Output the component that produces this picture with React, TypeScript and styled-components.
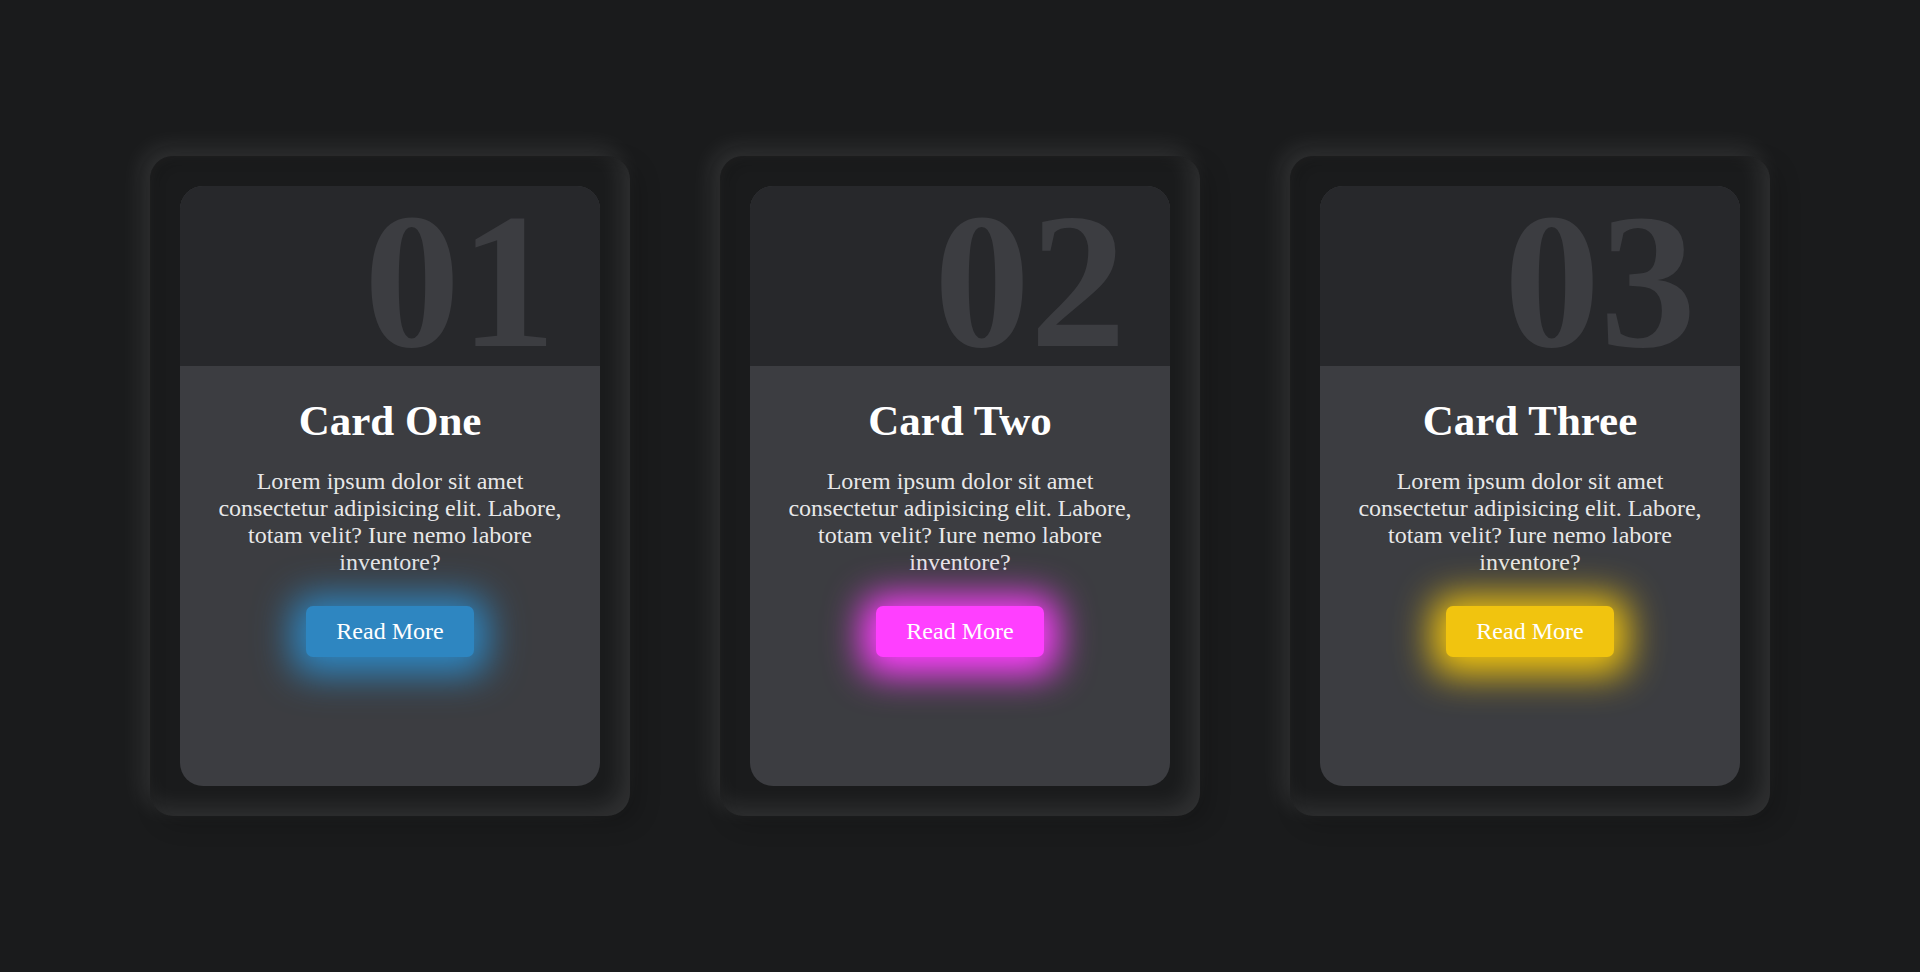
import React from 'react';
import styled, { createGlobalStyle } from 'styled-components';

const GlobalStyle = createGlobalStyle`
  * {
    margin: 0;
    padding: 0;
    box-sizing: border-box;
  }

  body {
    background: #1a1b1c;
    font-family: 'Liberation Serif', 'Times New Roman', serif;
  }
`;

const Page = styled.main`
  display: flex;
  flex-wrap: wrap;
  justify-content: center;
  align-items: center;
  align-content: center;
  gap: 90px;
  min-height: 100vh;
  padding: 45px;
`;

const Frame = styled.article`
  width: 480px;
  padding: 30px;
  border-radius: 23px;
  box-shadow:
    inset 8px 8px 8px rgba(0, 0, 0, 0.1),
    inset -8px -8px 23px rgba(255, 255, 255, 0.1),
    8px 8px 23px rgba(0, 0, 0, 0.2),
    -8px -8px 23px rgba(255, 255, 255, 0.1);
`;

const Panel = styled.div`
  min-height: 600px;
  border-radius: 23px;
  background: #3c3d41;
`;

const Header = styled.div`
  height: 180px;
  padding-right: 44px;
  border-radius: 23px 23px 0 0;
  background: #27282b;
  color: #3c3d41;
  font-size: 192px;
  font-weight: 700;
  line-height: 192px;
  text-align: right;
`;

const Body = styled.div`
  display: flex;
  flex-direction: column;
  align-items: center;
  padding: 31px 30px;
  text-align: center;
`;

const Title = styled.h2`
  margin-bottom: 23px;
  color: #fff;
  font-size: 43px;
  font-weight: 700;
  line-height: 48px;
`;

const Text = styled.p`
  margin-bottom: 30px;
  color: rgba(255, 255, 255, 0.9);
  font-size: 24px;
  line-height: 27px;
`;

const ReadMore = styled.a<{ $color: string }>`
  padding: 12px 30px;
  border-radius: 7px;
  background: ${({ $color }) => $color};
  box-shadow: 0 4px 36px 14px ${({ $color }) => $color};
  color: #fff;
  font-size: 24px;
  line-height: 27px;
  text-decoration: none;
`;

const cards = [
  { number: '01', title: 'Card One', color: '#2e86c1' },
  { number: '02', title: 'Card Two', color: '#ff3fff' },
  { number: '03', title: 'Card Three', color: '#f1c40f' },
];

export default function App() {
  return (
    <>
      <GlobalStyle />
      <Page>
        {cards.map(({ number, title, color }) => (
          <Frame key={number}>
            <Panel>
              <Header>{number}</Header>
              <Body>
                <Title>{title}</Title>
                <Text>
                  Lorem ipsum dolor sit amet consectetur adipisicing elit. Labore, totam velit? Iure
                  nemo labore inventore?
                </Text>
                <ReadMore href="#" $color={color}>
                  Read More
                </ReadMore>
              </Body>
            </Panel>
          </Frame>
        ))}
      </Page>
    </>
  );
}
